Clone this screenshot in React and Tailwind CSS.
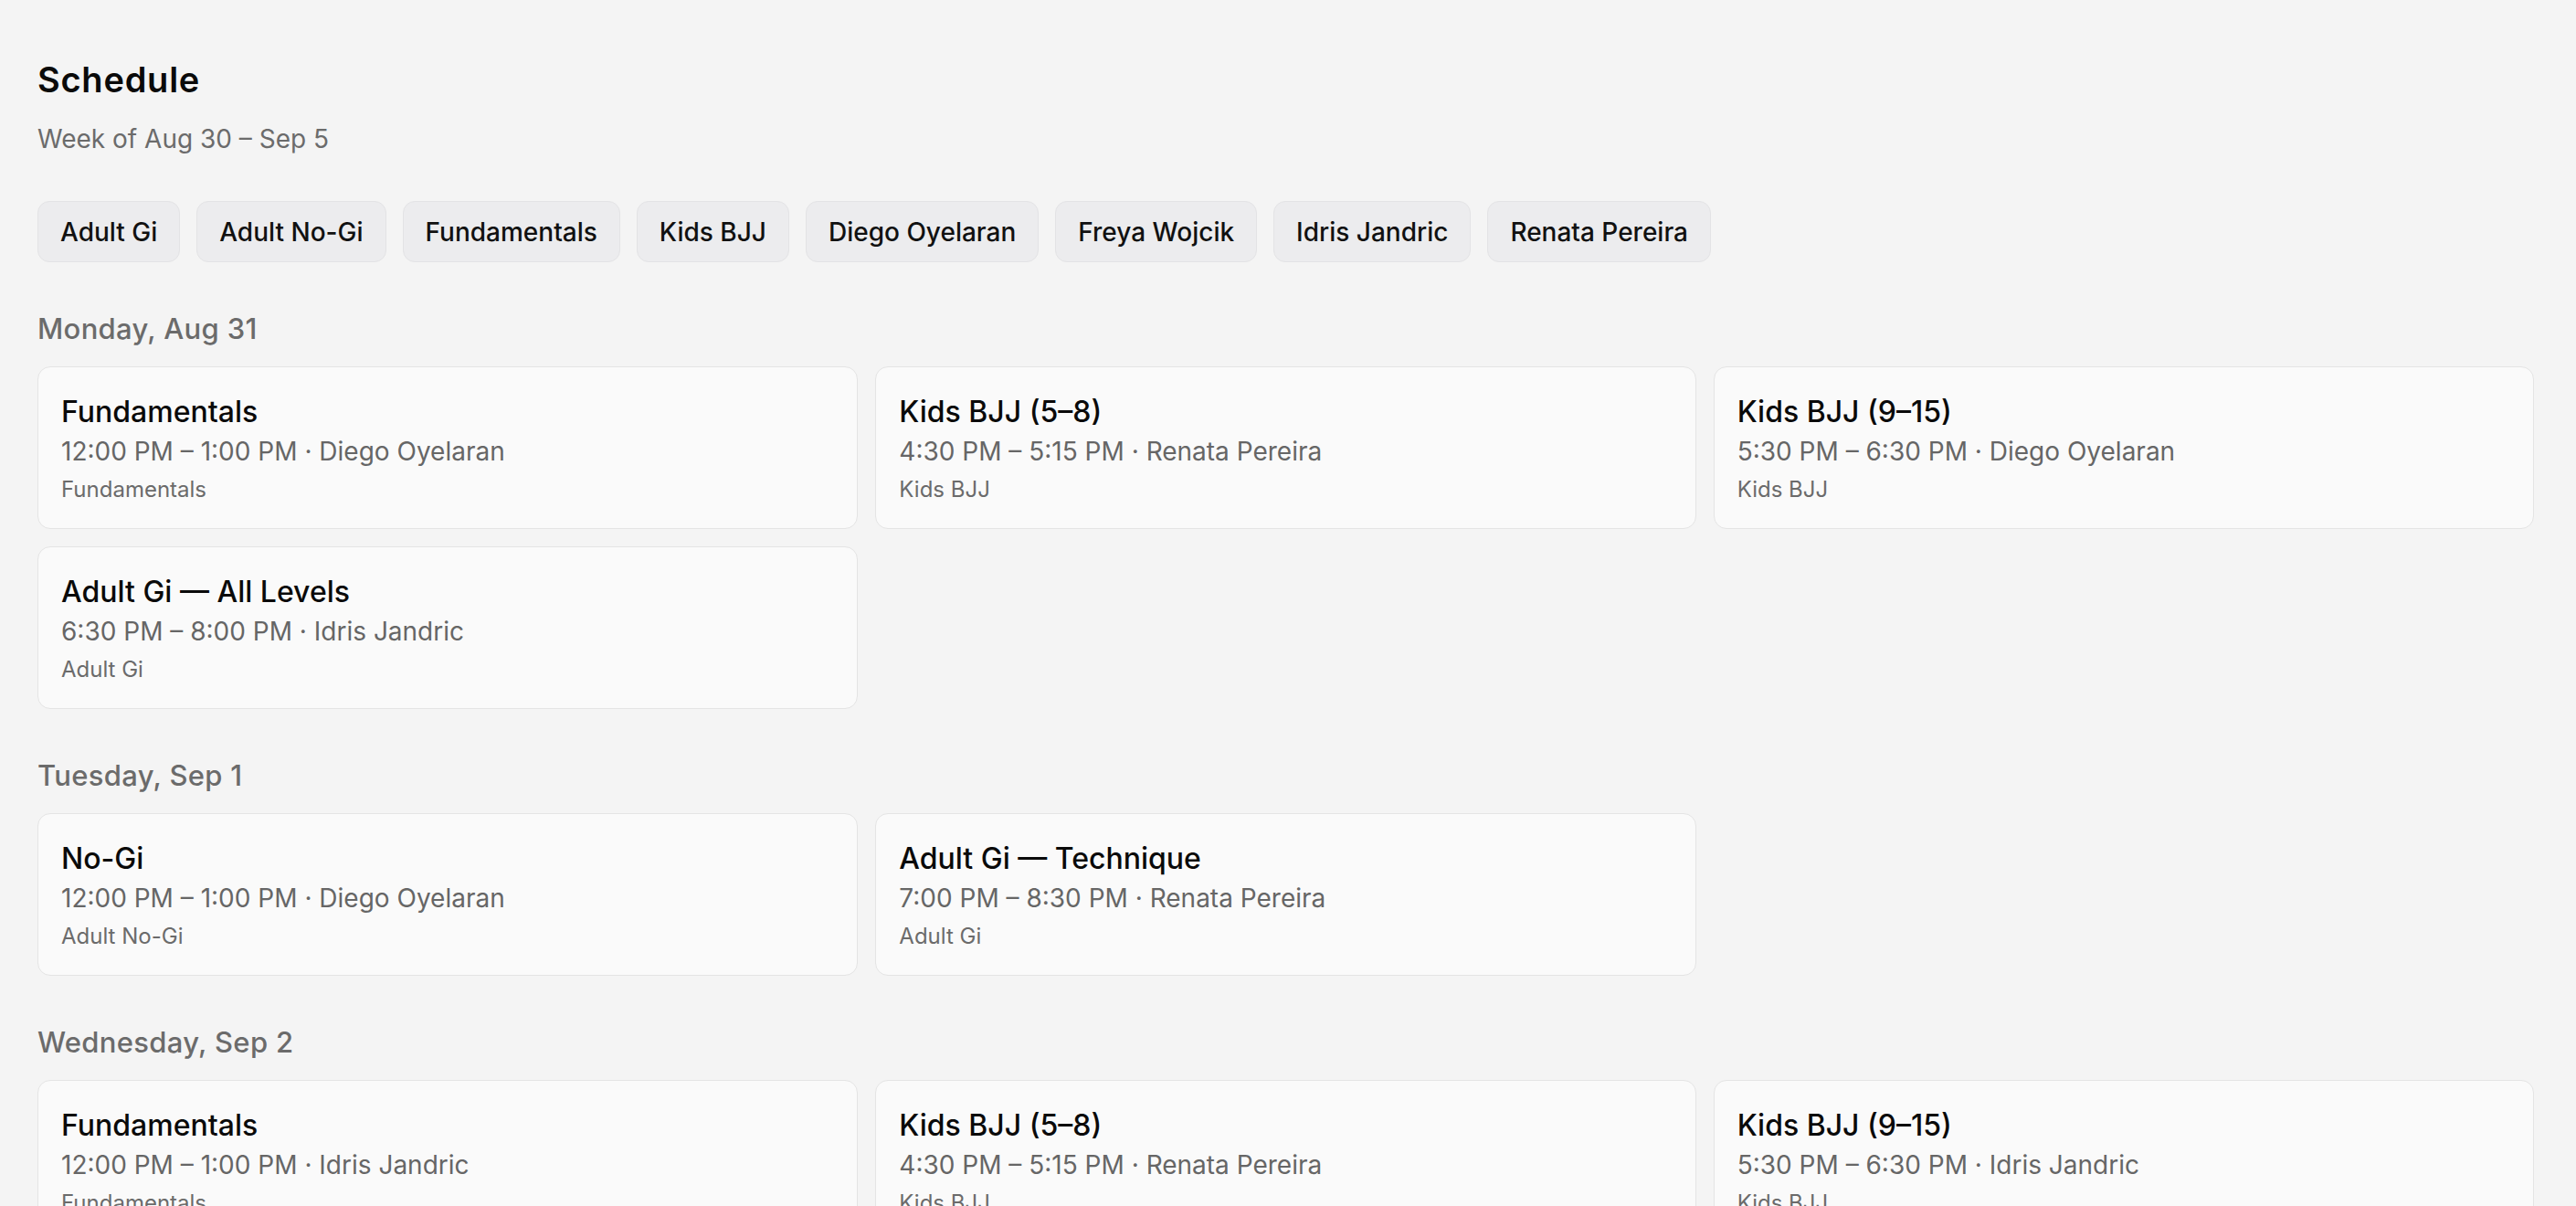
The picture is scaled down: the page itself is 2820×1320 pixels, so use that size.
const filters = [
  "Adult Gi",
  "Adult No-Gi",
  "Fundamentals",
  "Kids BJJ",
  "Diego Oyelaran",
  "Freya Wojcik",
  "Idris Jandric",
  "Renata Pereira",
];

const days = [
  {
    label: "Monday, Aug 31",
    classes: [
      { title: "Fundamentals", time: "12:00 PM – 1:00 PM", coach: "Diego Oyelaran", program: "Fundamentals" },
      { title: "Kids BJJ (5–8)", time: "4:30 PM – 5:15 PM", coach: "Renata Pereira", program: "Kids BJJ" },
      { title: "Kids BJJ (9–15)", time: "5:30 PM – 6:30 PM", coach: "Diego Oyelaran", program: "Kids BJJ" },
      { title: "Adult Gi — All Levels", time: "6:30 PM – 8:00 PM", coach: "Idris Jandric", program: "Adult Gi" },
    ],
  },
  {
    label: "Tuesday, Sep 1",
    classes: [
      { title: "No-Gi", time: "12:00 PM – 1:00 PM", coach: "Diego Oyelaran", program: "Adult No-Gi" },
      { title: "Adult Gi — Technique", time: "7:00 PM – 8:30 PM", coach: "Renata Pereira", program: "Adult Gi" },
    ],
  },
  {
    label: "Wednesday, Sep 2",
    classes: [
      { title: "Fundamentals", time: "12:00 PM – 1:00 PM", coach: "Idris Jandric", program: "Fundamentals" },
      { title: "Kids BJJ (5–8)", time: "4:30 PM – 5:15 PM", coach: "Renata Pereira", program: "Kids BJJ" },
      { title: "Kids BJJ (9–15)", time: "5:30 PM – 6:30 PM", coach: "Idris Jandric", program: "Kids BJJ" },
      { title: "Adult Gi — All Levels", time: "6:30 PM – 8:00 PM", coach: "Freya Wojcik", program: "Adult Gi" },
    ],
  },
  {
    label: "Thursday, Sep 3",
    classes: [
      { title: "No-Gi", time: "12:00 PM – 1:00 PM", coach: "Freya Wojcik", program: "Adult No-Gi" },
      { title: "Adult Gi — Technique", time: "7:00 PM – 8:30 PM", coach: "Diego Oyelaran", program: "Adult Gi" },
    ],
  },
];

function FilterChip({ label }) {
  return (
    <button
      type="button"
      className="flex h-[67px] items-center rounded-[13px] border border-[#e3e3e5] bg-[#ececee] px-[24px] text-[28px] leading-[36px] font-medium text-[#111111]"
    >
      {label}
    </button>
  );
}

function ClassCard({ item }) {
  return (
    <div className="flex h-[178px] flex-col rounded-[14px] border border-[#e4e4e4] bg-[#fafafa] px-[25px] pt-[29px]">
      <div className="text-[32px] leading-[40px] font-medium text-[#0a0a0a]">{item.title}</div>
      <div className="mt-[5px] text-[28px] leading-[36px] text-[#666666]">
        {item.time} · {item.coach}
      </div>
      <div className="mt-[8px] text-[24px] leading-[32px] text-[#6b6b6b]">{item.program}</div>
    </div>
  );
}

function DaySection({ day }) {
  return (
    <section className="flex flex-col">
      <h2 className="mb-[21px] text-[31px] leading-[40px] font-medium tracking-[0.01em] text-[#6b6b6b]">
        {day.label}
      </h2>
      <div className="grid grid-cols-3 gap-[19px]">
        {day.classes.map((item, i) => (
          <ClassCard key={i} item={item} />
        ))}
      </div>
    </section>
  );
}

export default function App() {
  return (
    <div
      className="min-h-screen bg-[#f4f4f4] pl-[41px] pt-[64px] pb-[60px]"
      style={{ fontFamily: 'Inter, "Noto Sans", sans-serif' }}
    >
      <div className="flex w-[2733px] flex-col">
        <h1 className="text-[38px] leading-[46px] font-semibold tracking-[0.02em] text-[#0a0a0a]">Schedule</h1>
        <p className="mt-[24px] text-[28px] leading-[36px] text-[#6b6b6b]">Week of Aug 30 – Sep 5</p>

        <div className="mt-[50px] flex flex-wrap gap-[18px]">
          {filters.map((f) => (
            <FilterChip key={f} label={f} />
          ))}
        </div>

        <div className="mt-[53px] flex flex-col gap-[53px]">
          {days.map((d) => (
            <DaySection key={d.label} day={d} />
          ))}
        </div>
      </div>
    </div>
  );
}
